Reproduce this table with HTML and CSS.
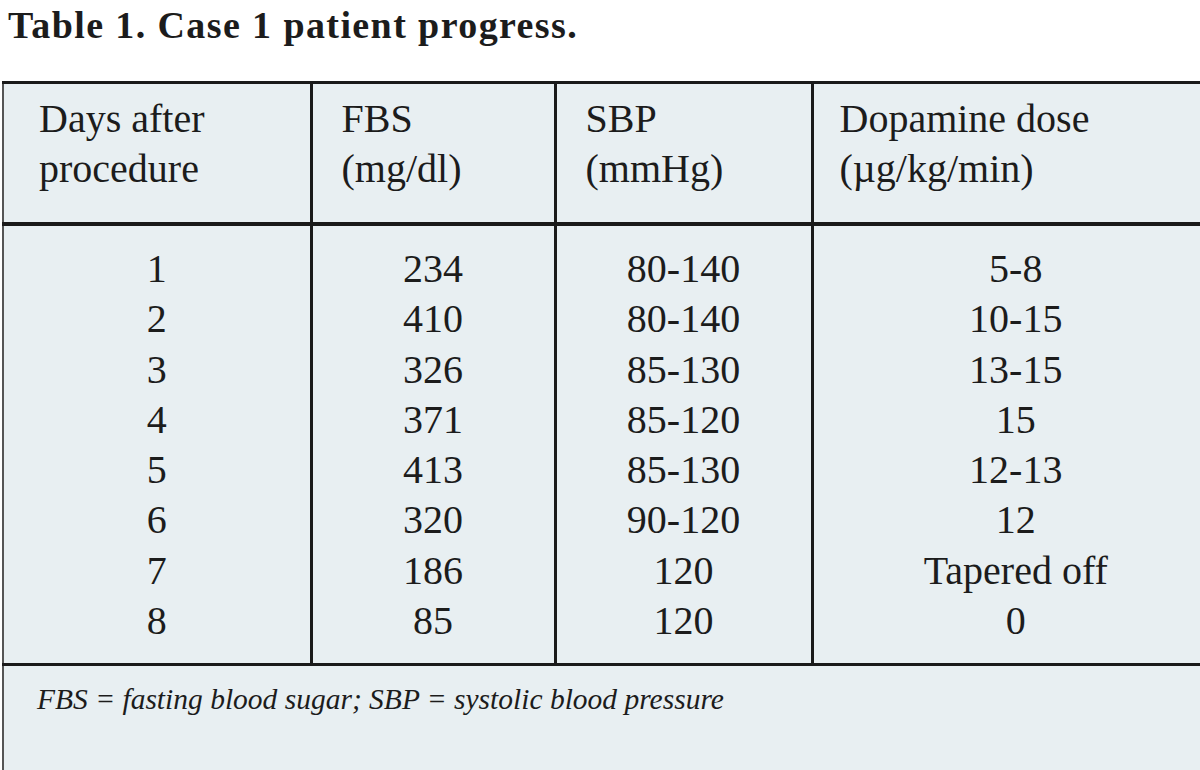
FILE: index.html
```html
<!DOCTYPE html>
<html>
<head>
<meta charset="utf-8">
<link rel="stylesheet" href="styles.css">
</head>
<body>
<div class="page">
  <h1 class="title">Table 1. Case 1 patient progress.</h1>
  <table class="tbl">
    <colgroup>
      <col class="c1"><col class="c2"><col class="c3"><col class="c4">
    </colgroup>
    <thead>
      <tr>
        <th class="h1">Days after<br>procedure</th>
        <th>FBS<br>(mg/dl)</th>
        <th>SBP<br>(mmHg)</th>
        <th class="h4">Dopamine dose<br>(µg/kg/min)</th>
      </tr>
    </thead>
    <tbody>
      <tr class="first"><td>1</td><td>234</td><td>80-140</td><td>5-8</td></tr>
      <tr><td>2</td><td>410</td><td>80-140</td><td>10-15</td></tr>
      <tr><td>3</td><td>326</td><td>85-130</td><td>13-15</td></tr>
      <tr><td>4</td><td>371</td><td>85-120</td><td>15</td></tr>
      <tr><td>5</td><td>413</td><td>85-130</td><td>12-13</td></tr>
      <tr><td>6</td><td>320</td><td>90-120</td><td>12</td></tr>
      <tr><td>7</td><td>186</td><td>120</td><td>Tapered off</td></tr>
      <tr class="last"><td>8</td><td>85</td><td>120</td><td>0</td></tr>
    </tbody>
    <tfoot>
      <tr>
        <td colspan="4" class="note">FBS = fasting blood sugar; SBP = systolic blood pressure</td>
      </tr>
    </tfoot>
  </table>
</div>
</body>
</html>
```
FILE: styles.css
```css
html, body {
  margin: 0;
  padding: 0;
  background: #ffffff;
  overflow: hidden;
}
.page {
  width: 1200px;
  height: 770px;
  overflow: hidden;
  font-family: "Liberation Serif", "Times New Roman", serif;
  color: #1c1c1c;
}
.title {
  margin: 0;
  padding: 4px 0 0 8px;
  font-size: 38px;
  line-height: 42px;
  letter-spacing: 1.4px;
  font-weight: bold;
  height: 74px;
  box-sizing: border-box;
}
.tbl {
  border-collapse: collapse;
  width: 1215px;
  margin-left: 2px;
  margin-top: 7px;
  background: #e8eff2;
  table-layout: fixed;
}
.c1 { width: 308px; }
.c2 { width: 244px; }
.c3 { width: 257px; }
.c4 { width: 406px; }
.tbl th {
  font-weight: normal;
  text-align: left;
  font-size: 40px;
  line-height: 50px;
  padding: 10px 0 28px 29px;
  border: 3px solid #1a1a1a;
  vertical-align: top;
}
.tbl th.h1 {
  padding-left: 35px;
  border-left: 2px solid #555;
}
.tbl th.h4 {
  padding-left: 26px;
  border-right: none;
}
.tbl thead tr {
  border-bottom: 4px solid #1a1a1a;
}
.tbl td {
  text-align: center;
  font-size: 40px;
  line-height: 50.3px;
  padding: 0;
  border-left: 3px solid #1a1a1a;
  border-right: 3px solid #1a1a1a;
}
.tbl td:first-child { border-left: 2px solid #555; }
.tbl td:last-child { border-right: none; }
.tbl tbody tr.first td { padding-top: 18px; }
.tbl tbody tr.last td { padding-bottom: 17px; border-bottom: 3px solid #1a1a1a; }
.tbl td.note {
  text-align: left;
  font-style: italic;
  font-size: 29.5px;
  line-height: 36px;
  padding: 15px 0 86px 33px;
  border-left: 2px solid #555;
  border-bottom: 1px solid #c4c8ca;
}
```
